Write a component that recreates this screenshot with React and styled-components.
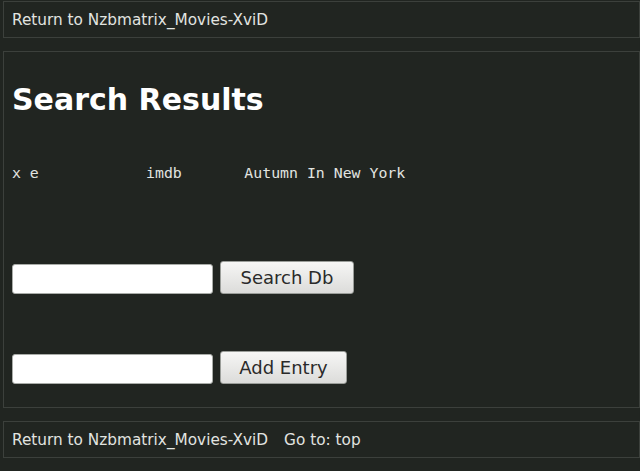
import React from "react";
import styled, { createGlobalStyle } from "styled-components";

const Global = createGlobalStyle`
  html, body { margin: 0; padding: 0; background: #212521; }
  body { font-family: "DejaVu Sans", sans-serif; color: #e2e4e0; }
`;

const Page = styled.div`
  display: flex;
  flex-direction: column;
  gap: 13px;
  padding: 1px 0 0 3px;
  width: 637px;
`;

const Box = styled.div`
  border: 1px solid #3c403c;
  padding: ${(p) => p.$pad || "9px 8px 8px"};
  display: flex;
  flex-direction: ${(p) => (p.$column ? "column" : "row")};
  align-items: flex-start;
  gap: ${(p) => (p.$column ? 0 : 16)}px;
`;

const NavLink = styled.a`
  font-size: 15.3px;
  line-height: 18px;
  color: #e2e4e0;
  text-decoration: none;
`;

const Heading = styled.h1`
  margin: 30px 0 0;
  font-size: 30px;
  line-height: 36px;
  font-weight: bold;
  color: #ffffff;
`;

const ResultRow = styled.pre`
  margin: 46px 0 0;
  font-family: "DejaVu Sans Mono", monospace;
  font-size: 14.85px;
  line-height: 18px;
  color: #e2e4e0;
`;

const FormRow = styled.form`
  display: flex;
  align-items: flex-end;
  gap: 7px;
  margin-top: ${(p) => p.$top}px;
`;

const TextInput = styled.input`
  box-sizing: border-box;
  width: 201px;
  height: 30px;
  border: 1px solid #a9aca8;
  border-radius: 3px;
  background: #ffffff;
  margin: 0;
`;

const Button = styled.button`
  box-sizing: border-box;
  width: ${(p) => p.$w}px;
  height: 33px;
  margin: 0;
  border: 1px solid #9a9d99;
  border-radius: 3px;
  background: linear-gradient(#f6f6f5, #dcdcda);
  font-family: "DejaVu Sans", sans-serif;
  font-size: 18px;
  color: #2a2a2a;
  padding: 0;
`;

export default function App() {
  return (
    <>
      <Global />
      <Page>
        <Box>
          <NavLink href="#">Return to Nzbmatrix_Movies-XviD</NavLink>
        </Box>
        <Box $column $pad="0 8px 23px">
          <Heading>Search Results</Heading>
          <ResultRow>{"x e            imdb       Autumn In New York"}</ResultRow>
          <FormRow $top={79}>
            <TextInput type="text" />
            <Button type="button" $w={134}>Search Db</Button>
          </FormRow>
          <FormRow $top={57}>
            <TextInput type="text" />
            <Button type="button" $w={127}>Add Entry</Button>
          </FormRow>
        </Box>
        <Box>
          <NavLink href="#">Return to Nzbmatrix_Movies-XviD</NavLink>
          <NavLink href="#">Go to: top</NavLink>
        </Box>
      </Page>
    </>
  );
}
